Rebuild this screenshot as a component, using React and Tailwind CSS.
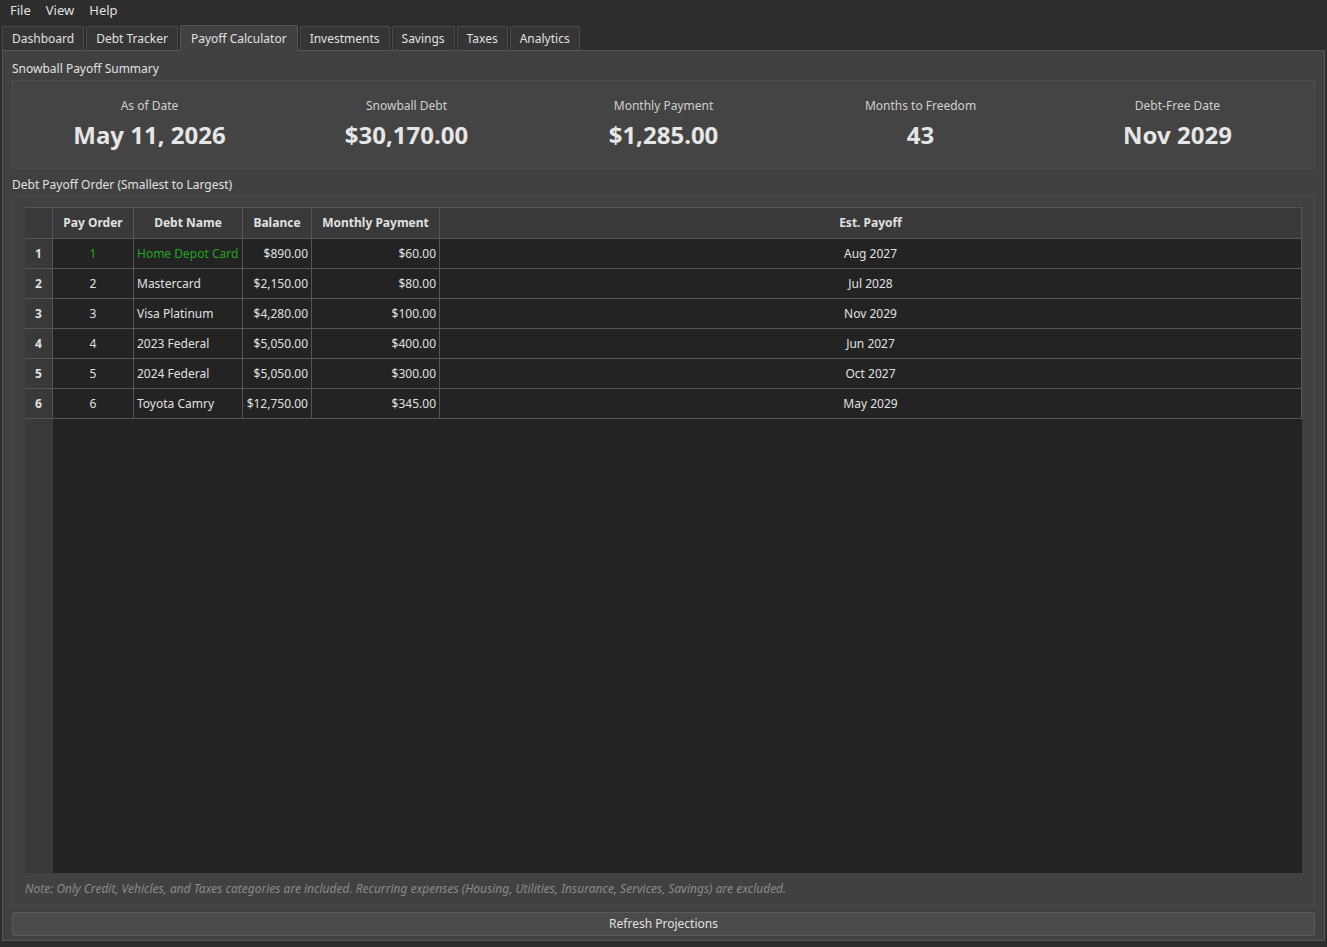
export default function App() {
  const rows = [
    ["1", "Home Depot Card", "$890.00", "$60.00", "Aug 2027", true],
    ["2", "Mastercard", "$2,150.00", "$80.00", "Jul 2028"],
    ["3", "Visa Platinum", "$4,280.00", "$100.00", "Nov 2029"],
    ["4", "2023 Federal", "$5,050.00", "$400.00", "Jun 2027"],
    ["5", "2024 Federal", "$5,050.00", "$300.00", "Oct 2027"],
    ["6", "Toyota Camry", "$12,750.00", "$345.00", "May 2029"],
  ];
  const stats = [
    ["As of Date", "May 11, 2026"],
    ["Snowball Debt", "$30,170.00"],
    ["Monthly Payment", "$1,285.00"],
    ["Months to Freedom", "43"],
    ["Debt-Free Date", "Nov 2029"],
  ];
  const tabs = ["Dashboard", "Debt Tracker", "Payoff Calculator", "Investments", "Savings", "Taxes", "Analytics"];
  const cols = "grid grid-cols-[28px_81px_109px_69px_128px_1fr]";
  return (
    <div className="w-[1327px] h-[947px] bg-[#2d2d2d] text-[#e0e0e0] text-[13px] flex flex-col" style={{ fontFamily: '"Noto Sans", "Open Sans", sans-serif' }}>
      <div className="h-[22px] flex items-center gap-[15px] px-[10px]">
        <span>File</span><span>View</span><span>Help</span>
      </div>
      <div className="flex items-end h-[28px] pl-[2px] pt-[3px] gap-[2px] text-[12px]">
        {tabs.map((t, i) => (
          <div key={t} className={i === 2
            ? "h-[26px] px-[10px] flex items-center bg-[#414141] border border-b-0 border-[#555] rounded-t-[2px] -mb-px relative z-10"
            : "h-[24px] px-[9px] flex items-center bg-[#353535] border border-b-0 border-[#4a4a4a] rounded-t-[2px]"}>{t}</div>
        ))}
      </div>
      <div className="mx-[2px] flex-1 mb-[6px] bg-[#414141] border border-[#555] flex flex-col px-[9px] pt-[9px] pb-[4px]">
        <div className="h-[18px] leading-[18px] text-[12px]">Snowball Payoff Summary</div>
        <div className="mt-[2px] h-[89px] border border-[#4c4c4c] bg-[#444] grid grid-cols-5 items-center px-[8px]">
          {stats.map(([l, v]) => (
            <div key={l} className="flex flex-col items-center">
              <div className="text-[12px] text-[#cfcfcf]">{l}</div>
              <div className="text-[24px] font-bold mt-[2px] text-[#e6e6e6]">{v}</div>
            </div>
          ))}
        </div>
        <div className="mt-[7px] h-[18px] leading-[18px] text-[12px]">Debt Payoff Order (Smallest to Largest)</div>
        <div className="mt-[2px] flex-1 border border-[#4c4c4c] flex flex-col px-[12px] pt-[10px]">
          <div className="flex-1 flex flex-col bg-[#232323] border-t border-[#555] text-[12px]">
            <div className={cols + " h-[30px] bg-[#393939] font-bold"}>
              <div className="border-r border-[#555]"></div>
              {["Pay Order", "Debt Name", "Balance", "Monthly Payment", "Est. Payoff"].map(h => (
                <div key={h} className="flex items-center justify-center border-r border-[#555]">{h}</div>
              ))}
            </div>
            {rows.map(r => (
              <div key={r[0]} className={cols + " h-[30px] border-t border-[#555]"}>
                <div className="bg-[#393939] font-bold flex items-center justify-center border-r border-[#555]">{r[0]}</div>
                <div className={"flex items-center justify-center border-r border-[#555] " + (r[5] ? "text-[#1fa61f]" : "")}>{r[0]}</div>
                <div className={"flex items-center px-[3px] border-r border-[#555] " + (r[5] ? "text-[#1fa61f]" : "")}>{r[1]}</div>
                <div className="flex items-center justify-end px-[3px] border-r border-[#555]">{r[2]}</div>
                <div className="flex items-center justify-end px-[3px] border-r border-[#555]">{r[3]}</div>
                <div className="flex items-center justify-center border-r border-[#555]">{r[4]}</div>
              </div>
            ))}
            <div className="flex-1 flex border-t border-[#555]">
              <div className="w-[28px] bg-[#393939]"></div>
            </div>
          </div>
          <div className="h-[32px] flex items-center italic text-[12px] text-[#8a8a8a]">
            Note: Only Credit, Vehicles, and Taxes categories are included. Recurring expenses (Housing, Utilities, Insurance, Services, Savings) are excluded.
          </div>
        </div>
        <div className="mt-[6px] h-[24px] border border-[#5a5a5a] rounded-[2px] bg-[#4a4a4a] flex items-center justify-center text-[12px]">Refresh Projections</div>
      </div>
    </div>
  );
}
